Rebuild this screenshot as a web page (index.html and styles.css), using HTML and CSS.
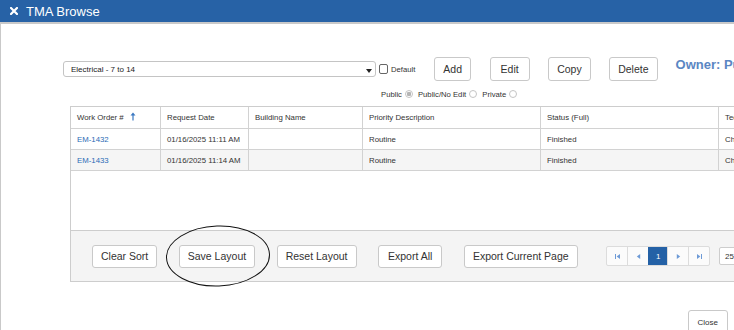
FILE: index.html
```html
<!DOCTYPE html>
<html lang="en">
<head>
    <meta charset="UTF-8">
    <title>TMA Browse</title>

    <link rel="stylesheet" href="styles.css">
</head>
<body>

    <div class="titlebar">
        <svg class="close-x" viewBox="0 0 8 8"><path d="M1 1 L7 7 M7 1 L1 7" stroke="#fff" stroke-width="2.2" stroke-linecap="square"/></svg>
        <span class="title">TMA Browse</span>
    </div>

    <div class="content">

        <div class="toolbar">
            <div class="layout-select">
                <span>Electrical - 7 to 14</span>
                <span class="caret"></span>
            </div>
            <label class="default"><span class="box"></span>Default</label>
            <div class="actions">
                <button class="btn">Add</button>
                <button class="btn wide">Edit</button>
                <button class="btn">Copy</button>
                <button class="btn">Delete</button>
            </div>
            <div class="owner">Owner: Public</div>
        </div>

        <div class="scope">
            <span>Public</span><span class="radio checked"></span>
            <span>Public/No Edit</span><span class="radio"></span>
            <span>Private</span><span class="radio"></span>
        </div>

        <div class="grid">
            <div class="grid-body">
                <table>
                    <thead>
                        <tr>
                            <th class="c1">Work Order #
                                <svg class="sort" viewBox="0 0 6 9"><path d="M3 8.5 V2" stroke="#3a78c2" stroke-width="1.2"/><path d="M0.5 3.5 L3 0.5 L5.5 3.5 Z" fill="#3a78c2"/></svg>
                            </th>
                            <th class="c2">Request Date</th>
                            <th class="c3">Building Name</th>
                            <th class="c4">Priority Description</th>
                            <th class="c5">Status (Full)</th>
                            <th class="c6">Technician</th>
                        </tr>
                    </thead>
                    <tbody>
                        <tr>
                            <td><a href="#">EM-1432</a></td>
                            <td>01/16/2025 11:11 AM</td>
                            <td></td>
                            <td>Routine</td>
                            <td>Finished</td>
                            <td>Charles</td>
                        </tr>
                        <tr class="alt">
                            <td><a href="#">EM-1433</a></td>
                            <td>01/16/2025 11:14 AM</td>
                            <td></td>
                            <td>Routine</td>
                            <td>Finished</td>
                            <td>Charles</td>
                        </tr>
                    </tbody>
                </table>
            </div>

            <div class="grid-footer">
                <button class="btn small">Clear Sort</button>
                <span class="annotated">
                    <button class="btn small">Save Layout</button>
                    <svg class="circle" viewBox="0 0 106 64"><ellipse cx="53" cy="32" rx="51.5" ry="30" transform="rotate(-2 53 32)" fill="none" stroke="#111" stroke-width="1"/></svg>
                </span>
                <button class="btn small">Reset Layout</button>
                <button class="btn small wide">Export All</button>
                <button class="btn small">Export Current Page</button>

                <div class="paging">
                    <div class="pager">
                        <span class="page"><svg viewBox="0 0 6 6"><rect x="0" y="0" width="1.2" height="6" fill="#6d9ad6"/><path d="M6 0 V6 L2 3 Z" fill="#6d9ad6"/></svg></span>
                        <span class="page"><svg viewBox="0 0 6 6"><path d="M5 0 V6 L1 3 Z" fill="#6d9ad6"/></svg></span>
                        <span class="page active">1</span>
                        <span class="page"><svg viewBox="0 0 6 6"><path d="M1 0 V6 L5 3 Z" fill="#6d9ad6"/></svg></span>
                        <span class="page"><svg viewBox="0 0 6 6"><path d="M0 0 V6 L4 3 Z" fill="#6d9ad6"/><rect x="4.8" y="0" width="1.2" height="6" fill="#6d9ad6"/></svg></span>
                    </div>
                    <div class="page-size">25</div>
                </div>
            </div>
        </div>

        <div class="dialog-footer">
            <button class="btn close">Close</button>
        </div>

    </div>

</body>
</html>
```

FILE: styles.css
```css
html, body{
    height: 100%;
}

body{
    margin: 0;
    overflow: hidden;
    background: #fff;
    color: #333;
    font-family: "Liberation Sans", Arial, sans-serif;
}

.titlebar{
    display: flex;
    align-items: center;
    height: 22px;
    padding-left: 10px;
    background: #2762a6;
    color: #fff;
    border-bottom: 2px solid #c9c9c9;
}

.close-x{
    width: 8px;
    height: 8px;
    margin-right: 8px;
}

.title{
    font-size: 13px;
}

.content{
    height: 306px;
    border-left: 1px solid #c9c9c9;
}

/* layout picker + buttons */
.toolbar{
    display: flex;
    align-items: center;
    height: 24px;
    padding-top: 33px;
    margin-left: 62px;
    white-space: nowrap;
}

.toolbar > *{
    flex-shrink: 0;
}

.layout-select{
    box-sizing: border-box;
    display: flex;
    align-items: center;
    justify-content: space-between;
    width: 313px;
    height: 16px;
    padding: 0 3px 0 7px;
    border: 1px solid #c4c4c4;
    border-radius: 3px;
    font-size: 8px;
    color: #222;
}

.caret{
    width: 0;
    height: 0;
    margin-top: 3px;
    border-left: 3.5px solid transparent;
    border-right: 3.5px solid transparent;
    border-top: 4px solid #222;
}

.default{
    display: flex;
    align-items: center;
    margin-left: 3px;
    font-size: 7.7px;
    color: #333;
}

.box{
    box-sizing: border-box;
    width: 9px;
    height: 10px;
    margin-right: 3px;
    border: 1px solid #666;
    border-radius: 2px;
}

.actions{
    display: flex;
    gap: 18.5px;
    margin-left: 19px;
}

.btn{
    box-sizing: border-box;
    flex-shrink: 0;
    height: 24px;
    padding: 0 8px;
    background: #fff;
    border: 1px solid #c9c9c9;
    border-radius: 3px;
    color: #333;
    font-family: "Liberation Sans", Arial, sans-serif;
    font-size: 10.5px;
}

.btn.wide{
    padding: 0 10px;
}

.owner{
    align-self: flex-start;
    margin-left: 18px;
    color: #5a86c3;
    font-size: 13px;
    font-weight: bold;
    line-height: 15px;
}

/* visibility radios */
.scope{
    display: flex;
    align-items: center;
    height: 10px;
    margin: 8px 0 0 380px;
    font-size: 7.7px;
    color: #333;
}

.radio{
    box-sizing: border-box;
    width: 8px;
    height: 8px;
    margin: 0 5px 0 3px;
    border: 1px solid #c4c4c4;
    border-radius: 50%;
}

.radio.checked{
    background: radial-gradient(circle, #b5b5b5 0 2px, #fff 2.5px);
}

/* grid */
.grid{
    width: 800px;
    margin: 7px 0 0 69px;
    border: 1px solid #cdcdcd;
    border-right: none;
}

.grid-body{
    height: 123px;
    overflow: hidden;
}

table{
    table-layout: fixed;
    border-collapse: separate;
    border-spacing: 0;
    width: 788px;
    font-size: 7.8px;
}

th, td{
    box-sizing: border-box;
    height: 21px;
    padding: 0 6px;
    border-right: 1px solid #d2d2d2;
    border-bottom: 1px solid #d2d2d2;
    text-align: left;
    font-weight: normal;
    white-space: nowrap;
    overflow: hidden;
}

th{
    height: 22px;
    padding-bottom: 1px;
}

.c1{ width: 90px; }
.c2{ width: 88px; }
.c3{ width: 114px; }
.c4{ width: 178px; }
.c5{ width: 178px; }
.c6{ width: 140px; }

.sort{
    width: 6px;
    height: 9px;
    margin-left: 4px;
    vertical-align: -1px;
}

tr.alt td{
    background: #f5f5f5;
}

a{
    color: #2a6bb5;
    text-decoration: none;
}

.grid-footer{
    display: flex;
    align-items: center;
    gap: 21.5px;
    height: 50px;
    padding-left: 21px;
    border-top: 1px solid #cdcdcd;
    background: #f4f4f4;
}

.btn.small{
    height: 23px;
}

.btn.small.wide{
    padding: 0 9px;
}

.annotated{
    position: relative;
    display: flex;
}

.circle{
    position: absolute;
    left: -14px;
    top: -21px;
    width: 106px;
    height: 64px;
    pointer-events: none;
}

.paging{
    display: flex;
    align-items: center;
    gap: 9px;
    margin-left: 7px;
}

.pager{
    display: flex;
    height: 18px;
    border: 1px solid #dcdcdc;
    border-radius: 2px;
    background: #fbfbfb;
}

.page{
    display: flex;
    align-items: center;
    justify-content: center;
    width: 20px;
    border-left: 1px solid #dcdcdc;
    font-size: 8px;
}

.page:first-child{
    border-left: none;
}

.page svg{
    width: 5px;
    height: 5px;
}

.page.active{
    width: 18px;
    background: #2461a6;
    border-left-color: #2461a6;
    color: #fff;
}

.page-size{
    box-sizing: border-box;
    width: 40px;
    height: 18px;
    padding: 4px 0 0 5px;
    background: #fff;
    border: 1px solid #cdcdcd;
    border-radius: 2px;
    font-size: 8px;
}

.dialog-footer{
    display: flex;
    justify-content: flex-end;
    margin-top: 28px;
    padding-right: 6px;
}

.btn.close{
    padding: 0 9px;
    font-size: 8px;
}
```
